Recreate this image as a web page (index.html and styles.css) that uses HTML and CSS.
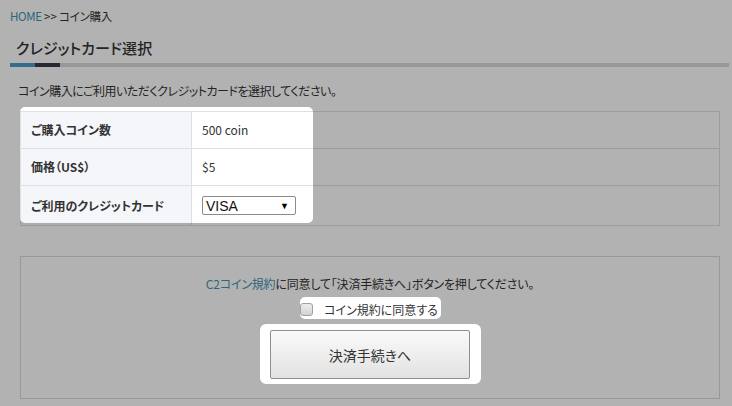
FILE: index.html
```html
<!DOCTYPE html>
<html lang="ja">
<head>
<meta charset="utf-8">
<title>クレジットカード選択</title>
<link rel="stylesheet" href="styles.css">
</head>
<body>
<div class="page">
  <div class="breadcrumb"><a class="link" href="#">HOME</a> <span class="sep">&gt;&gt;</span> コイン購入</div>
  <h1 class="title">クレジットカード選択</h1>
  <div class="title-bar"></div>
  <div class="section">
    <p class="desc">コイン購入にご利用いただくクレジットカードを選択してください。</p>
    <table class="info">
      <tr>
        <th>ご購入コイン数</th>
        <td>500 coin</td>
      </tr>
      <tr>
        <th>価格（US$）</th>
        <td>$5</td>
      </tr>
      <tr class="row-select">
        <th>ご利用のクレジットカード</th>
        <td>
          <div class="select"><span class="select-text">VISA</span><span class="select-arrow">▼</span></div>
        </td>
      </tr>
    </table>
    <div class="agree-box">
      <p class="agree-text"><a class="link" href="#">C2コイン規約</a>に同意して「決済手続きへ」ボタンを押してください。</p>
      <label class="agree-check"><span class="checkbox"></span><span class="check-label">コイン規約に同意する</span></label>
      <div class="btn-wrap"><button class="btn" type="button">決済手続きへ</button></div>
    </div>
  </div>
</div>
<svg class="overlay" width="732" height="406" viewBox="0 0 732 406">
  <path fill="#000" fill-opacity="0.3" fill-rule="evenodd" d="M0 0H732V406H0Z M25 107H308A5 5 0 0 1 313 112V218A5 5 0 0 1 308 223H25A5 5 0 0 1 20 218V112A5 5 0 0 1 25 107Z M305 297H436A5 5 0 0 1 441 302V314A5 5 0 0 1 436 319H305A5 5 0 0 1 300 314V302A5 5 0 0 1 305 297Z M266 324H475A6 6 0 0 1 481 330V378A6 6 0 0 1 475 384H266A6 6 0 0 1 260 378V330A6 6 0 0 1 266 324Z"/>
</svg>
</body>
</html>
```

FILE: styles.css
```css
html, body {
  margin: 0;
  padding: 0;
  background: #fff;
  overflow: hidden;
}
body {
  font-family: "Noto Sans CJK JP", "Noto Sans", sans-serif;
  font-feature-settings: "palt";
  color: #333;
  font-size: 12px;
  width: 732px;
  height: 406px;
  position: relative;
}
.page {
  padding: 9px 3px 0 10px;
}
.link {
  color: #3d95ad;
  text-decoration: none;
}
.breadcrumb {
  font-size: 11.5px;
  line-height: 14px;
  height: 14px;
  letter-spacing: -0.3px;
}
.sep {
  letter-spacing: 0;
}
.title {
  margin: 14px 0 0;
  padding: 0 0 4px 6px;
  font-size: 15px;
  line-height: 22px;
  font-weight: 500;
  letter-spacing: 0.1px;
  color: #333;
}
.title-bar {
  height: 4px;
  background: linear-gradient(to right, #4a9dc6 0, #4a9dc6 25px, #3a3a4a 25px, #3a3a4a 50px, #dcdcdc 50px);
}
.section {
  padding: 0 9px 0 10px;
}
.desc {
  margin: 16px 0 0 -2px;
  line-height: 16px;
  font-size: 12px;
  letter-spacing: -0.5px;
}
.info {
  margin-top: 12px;
  width: 700px;
  border-collapse: collapse;
  border: 1px solid #e0e0e4;
}
.info th, .info td {
  border-top: 1px solid #e0e0e4;
  padding: 10px 10px;
  line-height: 16px;
  height: 16px;
  text-align: left;
  font-size: 12px;
}
.info th {
  width: 150px;
  background: #f5f6fa;
  font-weight: 700;
  color: #333;
}
.info td {
  border-left: 1px solid #e0e0e4;
  color: #333;
}
.row-select th, .row-select td {
  padding-top: 10px;
  padding-bottom: 10px;
  height: 19px;
}
.select {
  height: 17px;
  border: 1px solid #8a8a8a;
  border-radius: 2px;
  display: flex;
  align-items: center;
  justify-content: space-between;
  padding: 0 6px 0 3px;
  box-sizing: content-box;
  width: 83px;
  font-family: "Liberation Sans", Arial, sans-serif;
  font-size: 14px;
  color: #111;
  background: #fff;
}
.select-arrow {
  font-size: 9px;
  color: #000;
}
.agree-box {
  margin-top: 30px;
  width: 698px;
  border: 1px solid #dadada;
  padding: 19px 0 14px;
  display: flex;
  flex-direction: column;
  align-items: center;
}
.agree-text {
  margin: 0;
  line-height: 16px;
  font-size: 12px;
  letter-spacing: -0.2px;
}
.agree-check {
  margin-top: 6px;
  height: 22px;
  display: flex;
  align-items: center;
  gap: 11px;
  padding: 0 5px 0 3px;
}
.checkbox {
  width: 11px;
  height: 11px;
  border: 1px solid #a0a0a0;
  border-radius: 3px;
  background: linear-gradient(#ececec, #d2d2d2);
}
.check-label {
  font-size: 12px;
}
.btn-wrap {
  margin-top: 5px;
  padding: 5px 10px;
}
.btn {
  width: 200px;
  height: 49px;
  border: 1px solid #8f8f8f;
  border-radius: 2px;
  background: linear-gradient(#fafafa, #e2e2e2);
  font-family: "Noto Sans CJK JP", sans-serif;
  font-feature-settings: "palt";
  font-size: 14px;
  color: #333;
  display: block;
}
.overlay {
  position: absolute;
  top: 0;
  left: 0;
}
```
